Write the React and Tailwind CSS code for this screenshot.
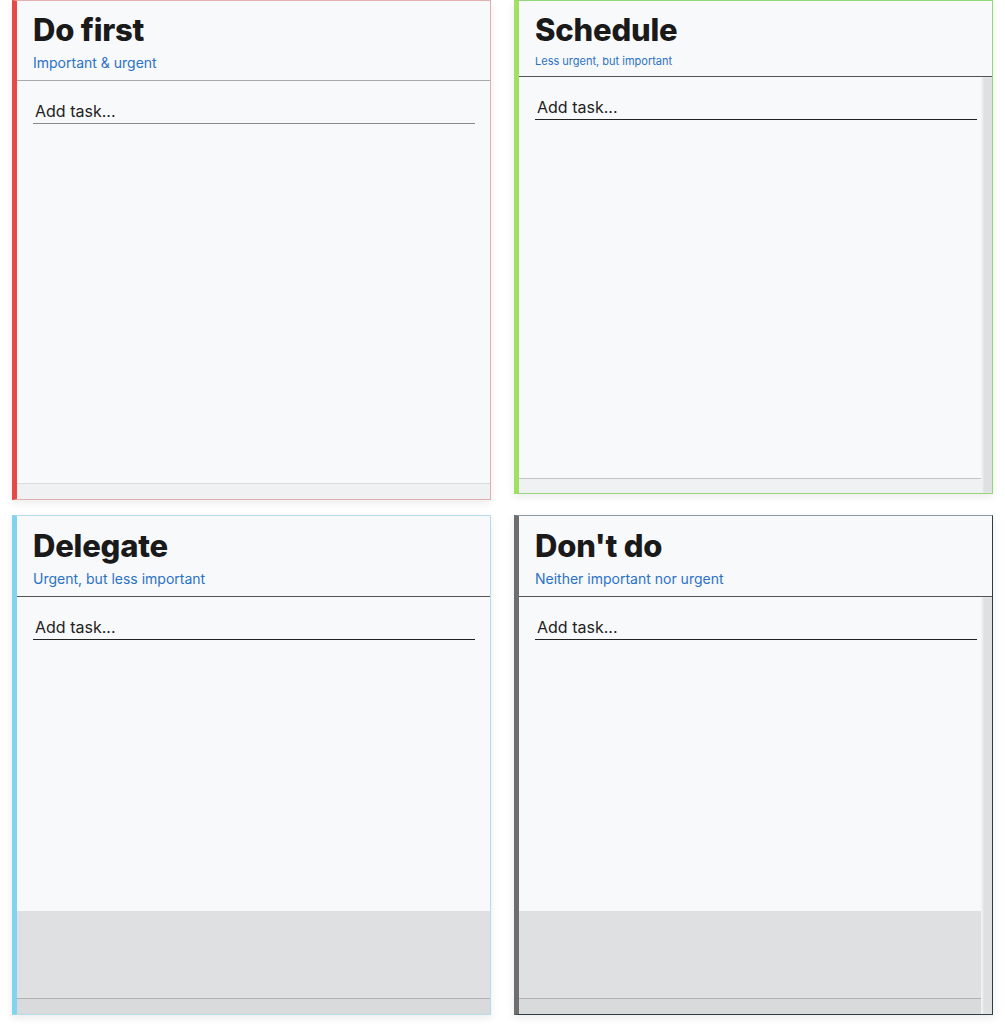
import { useState } from "react";

const quadrants = [
  {
    title: "Do first",
    subtitle: "Important & urgent",
    card: "h-[500px] border-[#e3aeae] border-l-[#e94848]",
    header: "h-[80px] border-[#a9a9ab]",
    sub: "text-[14px] leading-[20px] mt-[4px]",
    underline: "border-[#8a8a8a]",
    footerLine: "border-[#d9dadc]",
    footer: "bg-[#f0f1f3]",
    scroll: false,
    dimmed: false,
  },
  {
    title: "Schedule",
    subtitle: "Less urgent, but important",
    card: "h-[494px] border-[#94d67a] border-l-[#a2e062]",
    header: "h-[76px] border-[#555555]",
    sub: "text-[11px] leading-[16px] mt-[4px]",
    underline: "border-[#222222]",
    footerLine: "border-[#c4c4c6]",
    footer: "bg-[#f0f1f3] h-[15px]",
    scroll: true,
    dimmed: false,
  },
  {
    title: "Delegate",
    subtitle: "Urgent, but less important",
    card: "h-[500px] border-[#b7dbe8] border-l-[#7fd4ef]",
    header: "h-[81px] pt-[11px] border-[#555555]",
    sub: "text-[14px] leading-[20px] mt-[4px]",
    underline: "border-[#222222]",
    footerLine: "border-[#b2b2b2]",
    footer: "bg-[#d9dadc]",
    scroll: false,
    dimmed: true,
  },
  {
    title: "Don't do",
    subtitle: "Neither important nor urgent",
    card: "h-[500px] border-[#2f3f48] border-t-[#8e989e] border-l-[#6e6e6e]",
    header: "h-[81px] pt-[11px] border-[#555555]",
    sub: "text-[14px] leading-[20px] mt-[4px]",
    underline: "border-[#222222]",
    footerLine: "border-[#b2b2b2]",
    footer: "bg-[#d9dadc]",
    scroll: true,
    dimmed: true,
  },
];

function Quadrant({ q }) {
  const [task, setTask] = useState("");

  return (
    <section
      className={`flex flex-col border border-l-[5px] bg-[#f8f9fa] shadow-[0_3px_8px_rgba(0,0,0,0.08)] ${q.card}`}
    >
      <header className={`shrink-0 border-b px-4 pt-[10px] ${q.header}`}>
        <h2 className="text-[31px] leading-[38px] font-extrabold tracking-[-0.2px] text-[#1a1a1a]">
          {q.title}
        </h2>
        <p className={`text-[#2a72c7] ${q.sub}`}>{q.subtitle}</p>
      </header>

      <div className="flex min-h-0 flex-1">
        <div className="flex min-w-0 flex-1 flex-col">
          <div
            className={`flex flex-1 flex-col ${q.dimmed ? "bg-[#dfe0e2]" : ""}`}
          >
            <div
              className={`px-4 pt-[18px] ${q.dimmed ? "h-[314px] bg-[#f8f9fa]" : ""}`}
            >
              <input
                type="text"
                value={task}
                onChange={(e) => setTask(e.target.value)}
                placeholder="Add task..."
                className={`block h-[25px] w-[442px] border-b bg-transparent px-[2px] text-[16px] text-[#222] placeholder-[#222] outline-none ${q.underline}`}
              />
            </div>
          </div>
          <div className={`h-4 shrink-0 border-t ${q.footerLine} ${q.footer}`} />
        </div>
        {q.scroll && (
          <div className="w-[11px] shrink-0 bg-[#dfe0e2] shadow-[inset_2px_0_2px_rgba(255,255,255,0.6)]" />
        )}
      </div>
    </section>
  );
}

export default function App() {
  return (
    <div
      className="min-h-screen bg-white px-3"
      style={{ fontFamily: "Inter, 'Noto Sans', sans-serif" }}
    >
      <div className="grid grid-cols-[479px_479px] items-start gap-x-[23px] gap-y-[15px]">
        {quadrants.map((q) => (
          <Quadrant key={q.title} q={q} />
        ))}
      </div>
    </div>
  );
}
